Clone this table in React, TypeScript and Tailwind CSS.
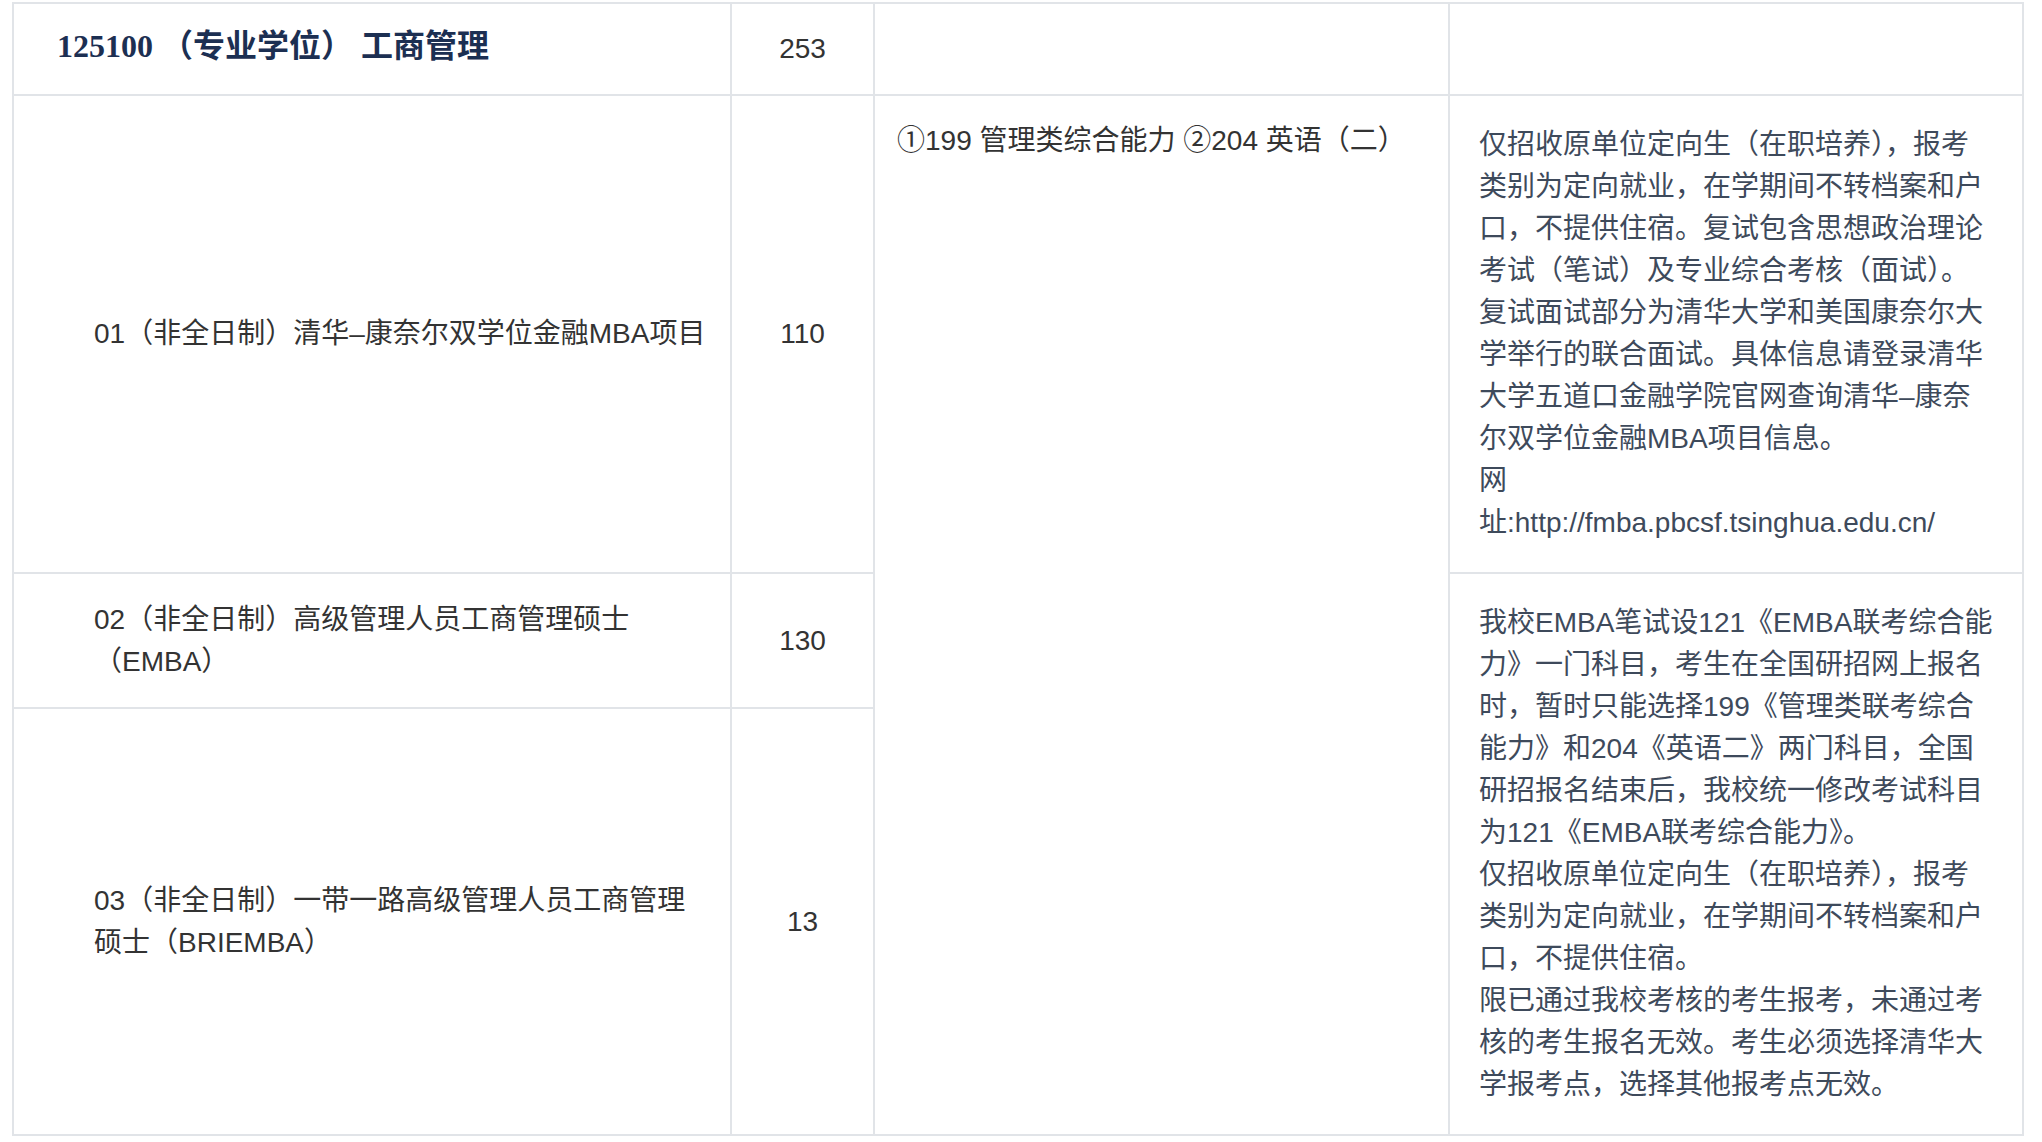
import React from "react";

const row2Notes = [
  "仅招收原单位定向生（在职培养），报考",
  "类别为定向就业，在学期间不转档案和户",
  "口，不提供住宿。复试包含思想政治理论",
  "考试（笔试）及专业综合考核（面试）。",
  "复试面试部分为清华大学和美国康奈尔大",
  "学举行的联合面试。具体信息请登录清华",
  "大学五道口金融学院官网查询清华–康奈",
  "尔双学位金融MBA项目信息。",
  "网",
  "址:http://fmba.pbcsf.tsinghua.edu.cn/",
];

const row34Notes = [
  "我校EMBA笔试设121《EMBA联考综合能",
  "力》一门科目，考生在全国研招网上报名",
  "时，暂时只能选择199《管理类联考综合",
  "能力》和204《英语二》两门科目，全国",
  "研招报名结束后，我校统一修改考试科目",
  "为121《EMBA联考综合能力》。",
  "仅招收原单位定向生（在职培养），报考",
  "类别为定向就业，在学期间不转档案和户",
  "口，不提供住宿。",
  "限已通过我校考核的考生报考，未通过考",
  "核的考生报名无效。考生必须选择清华大",
  "学报考点，选择其他报考点无效。",
];

function Lines({ lines }: { lines: string[] }) {
  return (
    <>
      {lines.map((l, i) => (
        <div key={i} className="whitespace-nowrap">
          {l}
        </div>
      ))}
    </>
  );
}

const cell = "border-r-2 border-b-2 border-[#e1e4e8]";

export default function App() {
  return (
    <div
      className="min-h-screen bg-white pt-[2px] pl-[12px] text-[28px] leading-[42px] text-[#333333]"
      style={{ fontFamily: '"Liberation Sans", "Noto Sans CJK SC", sans-serif' }}
    >
      <table className="table-fixed border-separate border-spacing-0 w-[2012px] border-l-2 border-t-2 border-[#e1e4e8]">
        <colgroup>
          <col className="w-[718px]" />
          <col className="w-[143px]" />
          <col className="w-[575px]" />
          <col className="w-[574px]" />
        </colgroup>
        <tbody>
          <tr className="h-[92px]">
            <td className={`${cell} pl-[43px] pb-[4px] align-middle`}>
              <span
                className="whitespace-nowrap text-[32px] text-[#1c2f52]"
                style={{ fontFamily: '"Liberation Serif", "Noto Sans CJK SC", serif' }}
              >
                <span className="font-bold">125100</span>
                <span className="font-semibold"> （专业学位） 工商管理</span>
              </span>
            </td>
            <td className={`${cell} text-center align-middle`}>253</td>
            <td className={cell}></td>
            <td className={cell}></td>
          </tr>
          <tr className="h-[478px]">
            <td className={`${cell} pl-[80px] align-middle`}>
              <div className="whitespace-nowrap">01（非全日制）清华–康奈尔双学位金融MBA项目</div>
            </td>
            <td className={`${cell} text-center align-middle`}>110</td>
            <td rowSpan={3} className={`${cell} pl-[22px] pt-[24px] align-top`}>
              <div className="whitespace-nowrap">①199 管理类综合能力 ②204 英语（二）</div>
            </td>
            <td className={`${cell} pl-[29px] pt-[28px] pb-[28px] align-top text-[#3e4a5b]`}>
              <Lines lines={row2Notes} />
            </td>
          </tr>
          <tr className="h-[135px]">
            <td className={`${cell} pl-[80px] align-middle`}>
              <div className="whitespace-nowrap">02（非全日制）高级管理人员工商管理硕士</div>
              <div className="whitespace-nowrap">（EMBA）</div>
            </td>
            <td className={`${cell} text-center align-middle`}>130</td>
            <td rowSpan={2} className={`${cell} pl-[29px] pt-[28px] pb-[28px] align-top text-[#3e4a5b]`}>
              <Lines lines={row34Notes} />
            </td>
          </tr>
          <tr className="h-[427px]">
            <td className={`${cell} pl-[80px] align-middle`}>
              <div className="whitespace-nowrap">03（非全日制）一带一路高级管理人员工商管理</div>
              <div className="whitespace-nowrap">硕士（BRIEMBA）</div>
            </td>
            <td className={`${cell} text-center align-middle`}>13</td>
          </tr>
        </tbody>
      </table>
    </div>
  );
}
